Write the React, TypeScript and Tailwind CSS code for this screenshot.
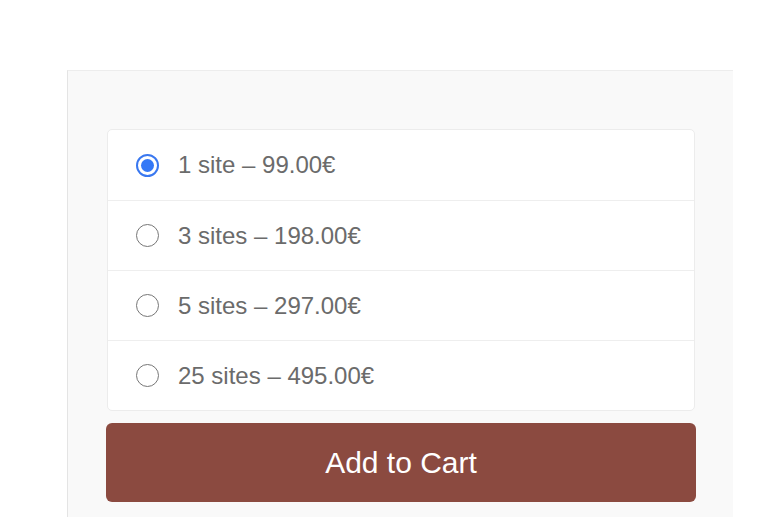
import React, { useState } from "react";

const options = [
  "1 site – 99.00€",
  "3 sites – 198.00€",
  "5 sites – 297.00€",
  "25 sites – 495.00€",
];

function Radio({ checked }: { checked: boolean }) {
  if (checked) {
    return (
      <span className="flex h-[23px] w-[23px] shrink-0 items-center justify-center rounded-full border-2 border-[#3a78f0] bg-white">
        <span className="h-[13px] w-[13px] rounded-full bg-[#3478f6]" />
      </span>
    );
  }
  return (
    <span className="h-[23px] w-[23px] shrink-0 rounded-full border-[1.5px] border-[#767676] bg-white" />
  );
}

export default function App() {
  const [sel, setSel] = useState(0);
  return (
    <div className="h-[517px] w-[768px] overflow-hidden bg-white font-['Liberation_Sans',Arial,sans-serif]">
      <div className="ml-[67px] mt-[70px] h-[447px] w-[666px] border-l border-t border-l-[#e4e4e4] border-t-[#ededed] border-l-dotted bg-[#f9f9f9] pl-[38px] pr-[37px] pt-[58px]">
        <div className="mx-px overflow-hidden rounded-[5px] border border-[#ececec] bg-white">
          {options.map((o, i) => (
            <div
              key={o}
              onClick={() => setSel(i)}
              className={
                "flex h-[70px] cursor-pointer items-center pl-[28px] " +
                (i > 0 ? "border-t border-[#eeeeee]" : "")
              }
            >
              <Radio checked={sel === i} />
              <span className="ml-[19px] text-[24px] leading-none text-[#6b6b6b]">{o}</span>
            </div>
          ))}
        </div>
        <button className="mt-[12px] flex h-[79px] w-full items-center justify-center rounded-[6px] bg-[#8b4a40] text-[30px] text-white">
          Add to Cart
        </button>
      </div>
    </div>
  );
}
